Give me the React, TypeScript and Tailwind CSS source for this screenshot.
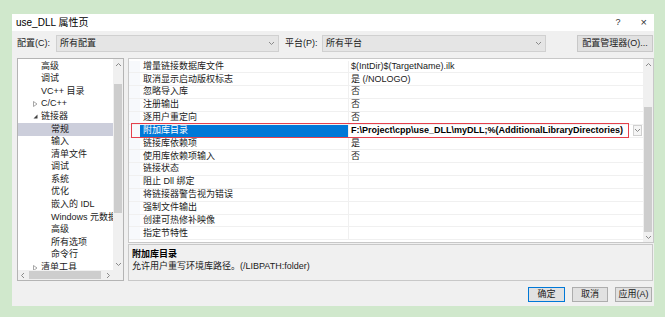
import React from "react";

const FONT = { fontFamily: '"Liberation Sans", "Noto Sans CJK SC", sans-serif' };

function Chevron({ dir, className = "" }: { dir: "up" | "down" | "left" | "right"; className?: string }) {
  const d: Record<string, string> = {
    up: "M1 4 L3.5 1.5 L6 4",
    down: "M1 2 L3.5 4.5 L6 2",
    left: "M4 1 L1.5 3.5 L4 6",
    right: "M2 1 L4.5 3.5 L2 6",
  };
  return (
    <svg width="7" height="7" viewBox="0 0 7 7" className={className}>
      <path d={d[dir]} fill="none" stroke="#8a8a8a" strokeWidth="1" />
    </svg>
  );
}

function Combo({ text, w }: { text: string; w: string }) {
  return (
    <div className={`${w} h-[17px] bg-[#e5e5e5] border border-[#d0d0d0] flex items-center justify-between pl-[3px] pr-[3px]`}>
      <span>{text}</span>
      <Chevron dir="down" />
    </div>
  );
}

type TreeItem = { t: string; lvl: 1 | 2; arrow?: "closed" | "open"; sel?: boolean };
const tree: TreeItem[] = [
  { t: "高级", lvl: 1 },
  { t: "调试", lvl: 1 },
  { t: "VC++ 目录", lvl: 1 },
  { t: "C/C++", lvl: 1, arrow: "closed" },
  { t: "链接器", lvl: 1, arrow: "open" },
  { t: "常规", lvl: 2, sel: true },
  { t: "输入", lvl: 2 },
  { t: "清单文件", lvl: 2 },
  { t: "调试", lvl: 2 },
  { t: "系统", lvl: 2 },
  { t: "优化", lvl: 2 },
  { t: "嵌入的 IDL", lvl: 2 },
  { t: "Windows 元数据", lvl: 2 },
  { t: "高级", lvl: 2 },
  { t: "所有选项", lvl: 2 },
  { t: "命令行", lvl: 2 },
  { t: "清单工具", lvl: 1, arrow: "closed" },
];

const props: [string, string][] = [
  ["增量链接数据库文件", "$(IntDir)$(TargetName).ilk"],
  ["取消显示启动版权标志", "是 (/NOLOGO)"],
  ["忽略导入库", "否"],
  ["注册输出", "否"],
  ["逐用户重定向", "否"],
  ["附加库目录", "F:\\Project\\cpp\\use_DLL\\myDLL;%(AdditionalLibraryDirectories)"],
  ["链接库依赖项", "是"],
  ["使用库依赖项输入", "否"],
  ["链接状态", ""],
  ["阻止 Dll 绑定", ""],
  ["将链接器警告视为错误", ""],
  ["强制文件输出", ""],
  ["创建可热修补映像", ""],
  ["指定节特性", ""],
];

export default function App() {
  return (
    <div className="w-[665px] h-[317px] bg-[#d0e8cc] pt-[14px] pl-[12px] text-[9px] text-[#1a1a1a] overflow-hidden" style={FONT}>
      <div className="w-[642px] h-[292px] bg-[#f0f0f0] flex flex-col">
        {/* title bar */}
        <div className="h-[17px] bg-white flex items-center justify-between pl-[4px] pr-[7px] shrink-0">
          <span className="text-[10px] text-black">use_DLL 属性页</span>
          <div className="flex items-center gap-[20px] text-[#333]">
            <span className="text-[9px]">?</span>
            <span className="text-[11px] leading-none">×</span>
          </div>
        </div>
        {/* config row */}
        <div className="mt-[4px] h-[17px] flex items-center pl-[5px] shrink-0">
          <span className="w-[39px]">配置(C):</span>
          <Combo text="所有配置" w="w-[223px]" />
          <span className="ml-[6px] w-[37px]">平台(P):</span>
          <Combo text="所有平台" w="w-[224px]" />
          <div className="ml-[31px] w-[76px] h-[17px] bg-[#e1e1e1] border border-[#c8c8c8] flex items-center justify-center">
            配置管理器(O)...
          </div>
        </div>
        {/* main area */}
        <div className="mt-[6px] flex pl-[5px] gap-[4px] h-[223px] shrink-0">
          {/* tree */}
          <div className="w-[107px] h-[223px] border border-[#b4b4b4] bg-white flex flex-col">
            <div className="flex flex-1 min-h-0">
              <div className="flex-1 overflow-hidden pt-[1px]">
                {tree.map((it, i) => (
                  <div
                    key={i}
                    className={`h-[12.6px] flex items-center whitespace-nowrap ${it.sel ? "bg-[#cccedb]" : ""} ${it.lvl === 1 ? "pl-[15px]" : "pl-[25px]"}`}
                  >
                    <span className="w-[8px] flex items-center shrink-0">
                      {it.arrow === "closed" && (
                        <svg width="5" height="6" viewBox="0 0 5 6">
                          <path d="M0.5 0.5 L4 3 L0.5 5.5 Z" fill="none" stroke="#909090" strokeWidth="0.8" />
                        </svg>
                      )}
                      {it.arrow === "open" && (
                        <svg width="5" height="5" viewBox="0 0 5 5">
                          <path d="M4.5 0.5 L4.5 4.5 L0.5 4.5 Z" fill="#404040" />
                        </svg>
                      )}
                    </span>
                    <span>{it.t}</span>
                  </div>
                ))}
              </div>
              {/* v scrollbar */}
              <div className="w-[10px] bg-[#f0f0f0] flex flex-col items-center">
                <div className="h-[12px] flex items-center"><Chevron dir="up" /></div>
                <div className="mt-[13px] w-[8px] h-[129px] bg-[#cdcdcd]" />
                <div className="flex-1" />
                <div className="h-[12px] flex items-center"><Chevron dir="down" /></div>
              </div>
            </div>
            {/* h scrollbar */}
            <div className="h-[10px] flex shrink-0">
              <div className="flex-1 bg-[#f0f0f0] flex items-center">
                <div className="w-[10px] flex justify-center"><Chevron dir="left" /></div>
                <div className="ml-[1px] h-[8px] w-[72px] bg-[#cdcdcd]" />
                <div className="flex-1" />
                <div className="w-[10px] flex justify-center"><Chevron dir="right" /></div>
              </div>
              <div className="w-[10px] bg-[#f0f0f0]" />
            </div>
          </div>
          {/* right column */}
          <div className="flex-1 flex flex-col">
            <div className="h-[185px] border border-[#c8c8c8] bg-white flex">
              <div className="flex-1 pt-[1.5px]">
                {props.map(([n, v], i) => {
                  const sel = i === 5;
                  return (
                    <div key={i} className="relative h-[12.85px] flex border-b border-[#f0f0f0]">
                      <div className="w-[11px] bg-[#f7f9fc] shrink-0" />
                      <div className={`w-[208px] shrink-0 flex items-center pl-[3px] ${sel ? "bg-[#0078d7] text-white" : ""}`}>{n}</div>
                      <div className="flex-1 border-l border-[#f0f0f0] flex items-center pl-[2px] whitespace-nowrap">
                        {sel ? (
                          <>
                            <span className="font-bold text-black">{v}</span>
                            <div className="ml-auto mr-[1px] w-[9px] h-[11px] border border-[#d0d0d0] bg-[#f5f5f5] flex items-center justify-center">
                              <Chevron dir="down" />
                            </div>
                          </>
                        ) : (
                          <span>{v}</span>
                        )}
                      </div>
                      {sel && (
                        <div className="absolute left-[2px] w-[498px] -top-[1.5px] -bottom-[1.5px] border-[1.5px] border-[#e5404c] pointer-events-none" />
                      )}
                    </div>
                  );
                })}
              </div>
              {/* grid scrollbar */}
              <div className="w-[10px] bg-[#f0f0f0] flex flex-col items-center">
                <div className="h-[12px] flex items-center"><Chevron dir="up" /></div>
                <div className="mt-[36px] w-[8px] h-[125px] bg-[#cdcdcd]" />
                <div className="flex-1" />
                <div className="h-[10px] flex items-center"><Chevron dir="down" /></div>
              </div>
            </div>
            <div className="mt-[1px] h-[38px] mr-[1px] border border-[#c8c8c8] bg-[#f0f0f0] pl-[3px] pt-[3px] leading-[12px]">
              <div className="font-bold text-black">附加库目录</div>
              <div>允许用户重写环境库路径。(/LIBPATH:folder)</div>
            </div>
          </div>
        </div>
        {/* buttons */}
        <div className="mt-[6px] flex justify-end gap-[7px] pr-[2px]">
          <div className="w-[37px] h-[15px] bg-[#e1e1e1] border-[1.5px] border-[#0078d7] flex items-center justify-center">确定</div>
          <div className="w-[36px] h-[15px] bg-[#e1e1e1] border border-[#adadad] flex items-center justify-center">取消</div>
          <div className="w-[37px] h-[15px] bg-[#e1e1e1] border border-[#adadad] flex items-center justify-center">应用(A)</div>
        </div>
      </div>
    </div>
  );
}
